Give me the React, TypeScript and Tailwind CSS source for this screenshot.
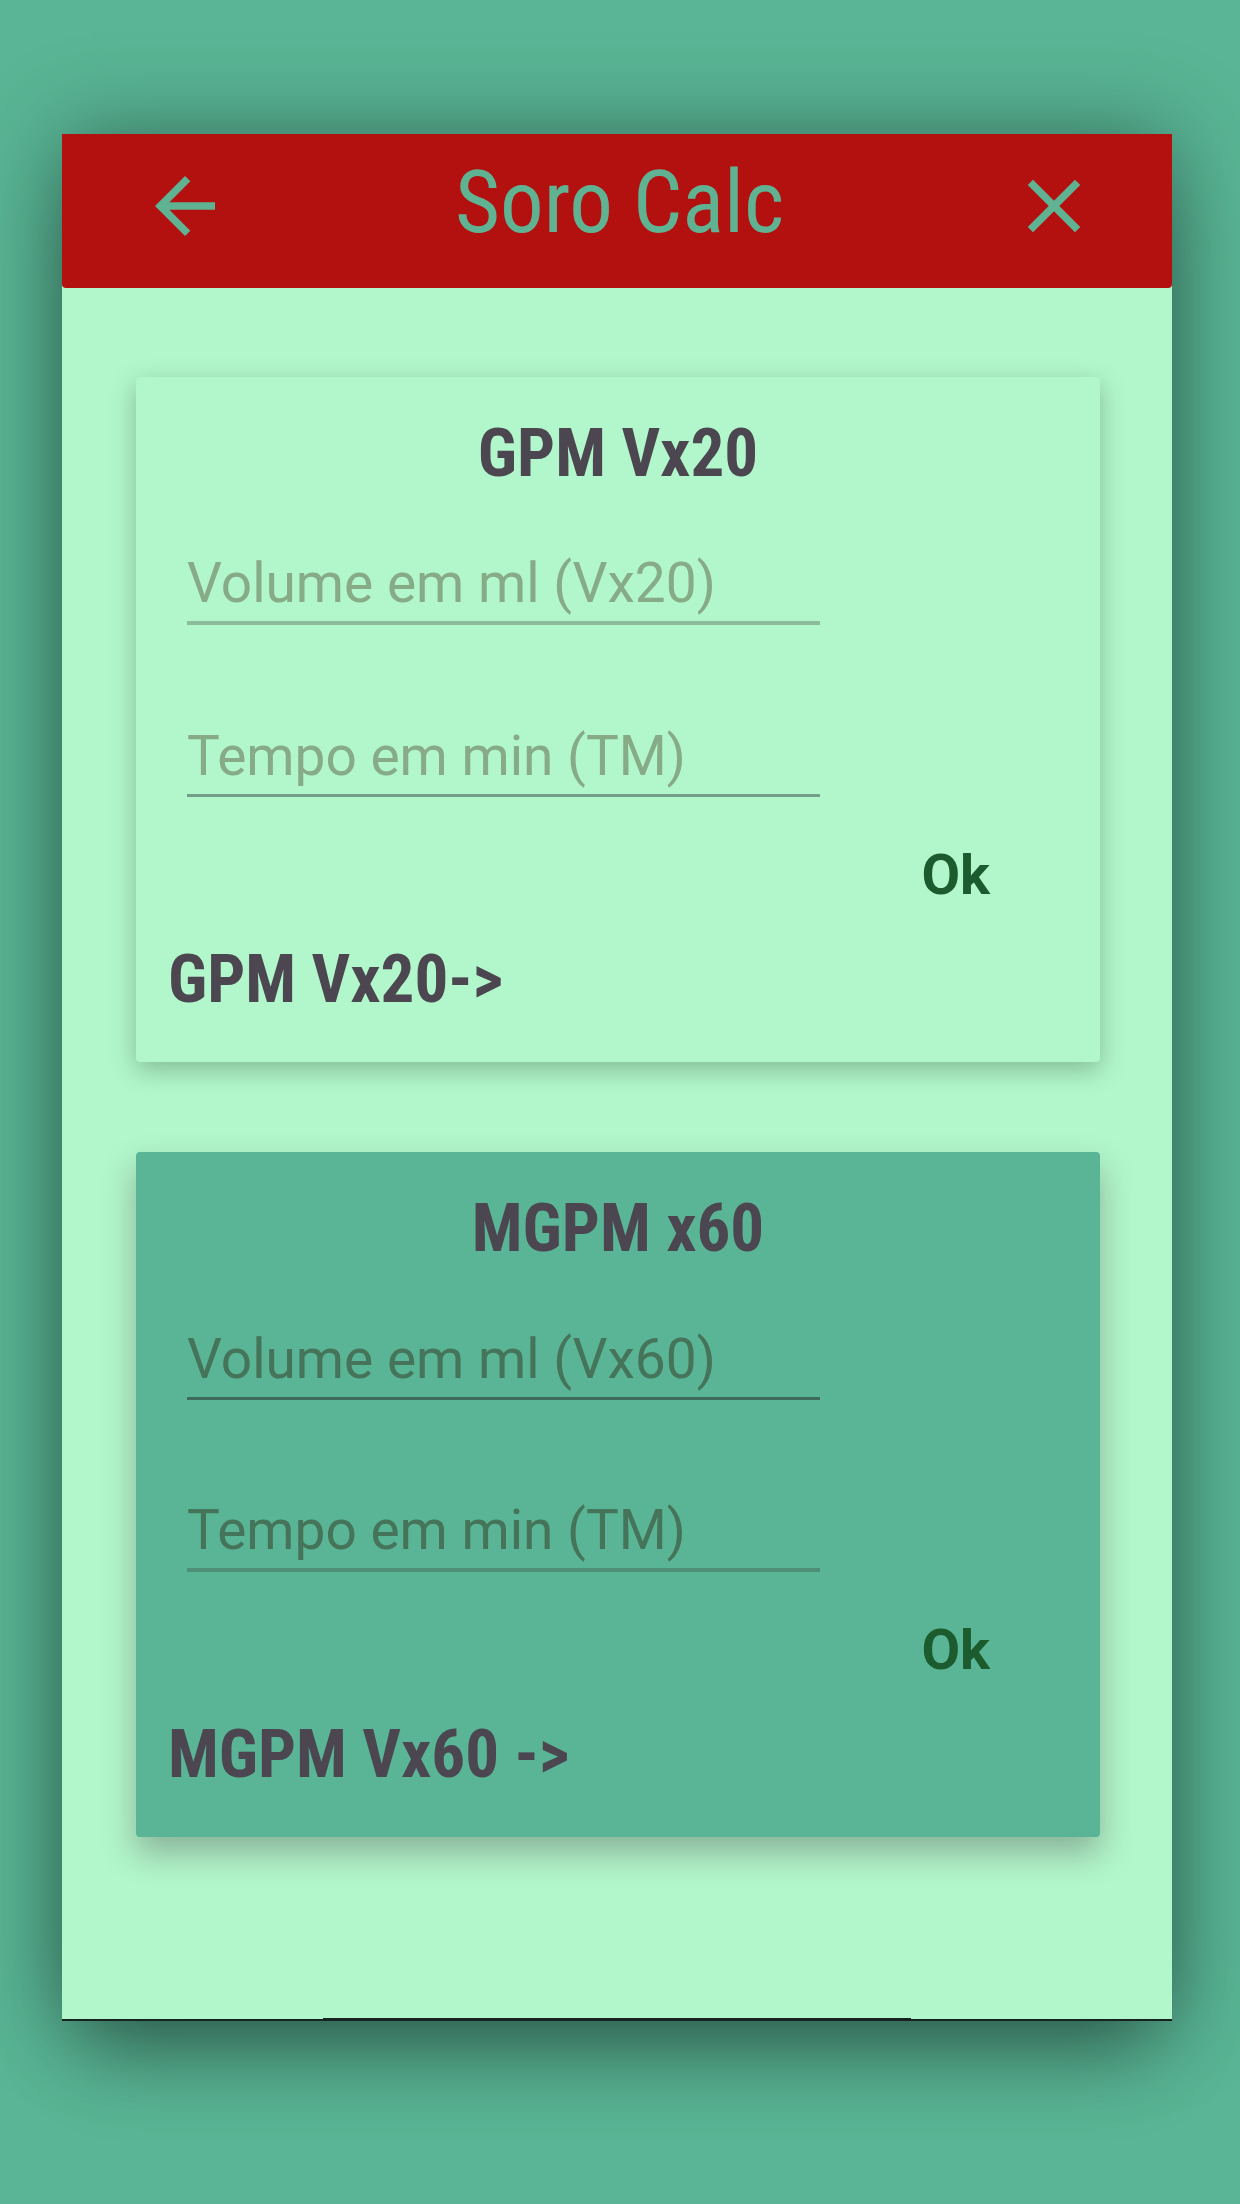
import clsx from "clsx";
import * as React from "react";
import { MdArrowBack, MdClose } from "react-icons/md";

const calculators = [
  {
    id: "gpm",
    title: "GPM Vx20",
    volumeLabel: "Volume em ml (Vx20)",
    timeLabel: "Tempo em min (TM)",
    resultLabel: "GPM Vx20->",
    factor: 20,
    tone: "light",
  },
  {
    id: "mgpm",
    title: "MGPM x60",
    volumeLabel: "Volume em ml (Vx60)",
    timeLabel: "Tempo em min (TM)",
    resultLabel: "MGPM Vx60 ->",
    factor: 60,
    tone: "dark",
  },
];

const display = "font-['Roboto_Condensed','Roboto',sans-serif]";

function Field({
  id,
  label,
  className,
  value,
  onChange,
}: {
  id: string;
  label: string;
  className: string;
  value: string;
  onChange: (value: string) => void;
}) {
  return (
    <input
      id={id}
      type="text"
      inputMode="decimal"
      aria-label={label}
      placeholder={label}
      value={value}
      onChange={(e) => onChange(e.target.value)}
      className={clsx(
        "h-[79px] w-full bg-transparent text-[55px] outline-none",
        className,
      )}
    />
  );
}

function CalcCard({ calc }: { calc: (typeof calculators)[number] }) {
  const [volume, setVolume] = React.useState("");
  const [time, setTime] = React.useState("");
  const [result, setResult] = React.useState("");
  const dark = calc.tone === "dark";

  function handleSubmit(e: React.FormEvent) {
    e.preventDefault();
    const value = (Number(volume) * calc.factor) / Number(time);
    setResult(Number.isFinite(value) ? ` ${value.toFixed(1)}` : "");
  }

  return (
    <form
      onSubmit={handleSubmit}
      className={clsx(
        "flex flex-col rounded-[4px] pt-9 pb-[43px]",
        dark
          ? "bg-[#59b595] shadow-[0_16px_32px_rgba(70,70,70,0.38)]"
          : "bg-[#b2f6cb] shadow-[0_8px_24px_rgba(50,90,65,0.36)]",
      )}
    >
      <h2
        className={clsx(
          display,
          "text-center text-[67px] leading-[80px] font-bold text-[#4c4650]",
        )}
      >
        {calc.title}
      </h2>

      <div className="mt-[53px] flex flex-col gap-[93px] pr-[280px] pl-[51px]">
        <Field
          id={`${calc.id}-volume`}
          label={calc.volumeLabel}
          value={volume}
          onChange={setVolume}
          className={
            dark
              ? "border-b-3 border-[#3f6b5b] placeholder:text-[#45745a]"
              : "border-b-4 border-[#8dbc9d] placeholder:text-[#86ab86]"
          }
        />
        <Field
          id={`${calc.id}-time`}
          label={calc.timeLabel}
          value={time}
          onChange={setTime}
          className={
            dark
              ? "border-b-4 border-[#4f8f78] placeholder:text-[#45745a]"
              : "border-b-3 border-[#729f88] placeholder:text-[#86ab86]"
          }
        />
      </div>

      <div className="mt-[46px] flex justify-end pr-[110px]">
        <button
          type="submit"
          className="text-[56px] leading-[64px] font-bold text-[#1c5b2e]"
        >
          Ok
        </button>
      </div>

      <output
        htmlFor={`${calc.id}-volume ${calc.id}-time`}
        className={clsx(
          display,
          "mt-8 pl-8 text-[67px] leading-[80px] font-bold text-[#4c4650]",
        )}
      >
        {calc.resultLabel}
        {result}
      </output>
    </form>
  );
}

export default function App() {
  return (
    <div className="min-h-screen bg-[#59b595] pt-[134px] pr-[68px] pb-[183px] pl-[62px] font-['Roboto',sans-serif]">
      <main className="bg-[#b2f6cb] shadow-[0_0_84px_rgba(0,0,0,0.38),0_50px_80px_-20px_rgba(0,0,0,0.32)]">
        <header className="flex h-[154px] items-center justify-between rounded-b-[4px] bg-[#b3110f] pr-[73px] pb-[10px] pl-[78px] text-[#5fb393]">
          <button type="button" aria-label="Voltar">
            <MdArrowBack className="size-[90px]" />
          </button>
          <h1 className={clsx(display, "pb-2 text-[87px] leading-[100px]")}>
            Soro Calc
          </h1>
          <button type="button" aria-label="Fechar">
            <MdClose className="size-[90px]" />
          </button>
        </header>

        <div className="flex flex-col gap-[90px] pt-[89px] pr-[72px] pb-[181px] pl-[74px]">
          {calculators.map((calc) => (
            <CalcCard key={calc.id} calc={calc} />
          ))}
        </div>

        <div className="flex justify-center border-b-2 border-[#16231e]">
          <div className="h-px w-[53%] bg-[#16231e]" />
        </div>
      </main>
    </div>
  );
}
